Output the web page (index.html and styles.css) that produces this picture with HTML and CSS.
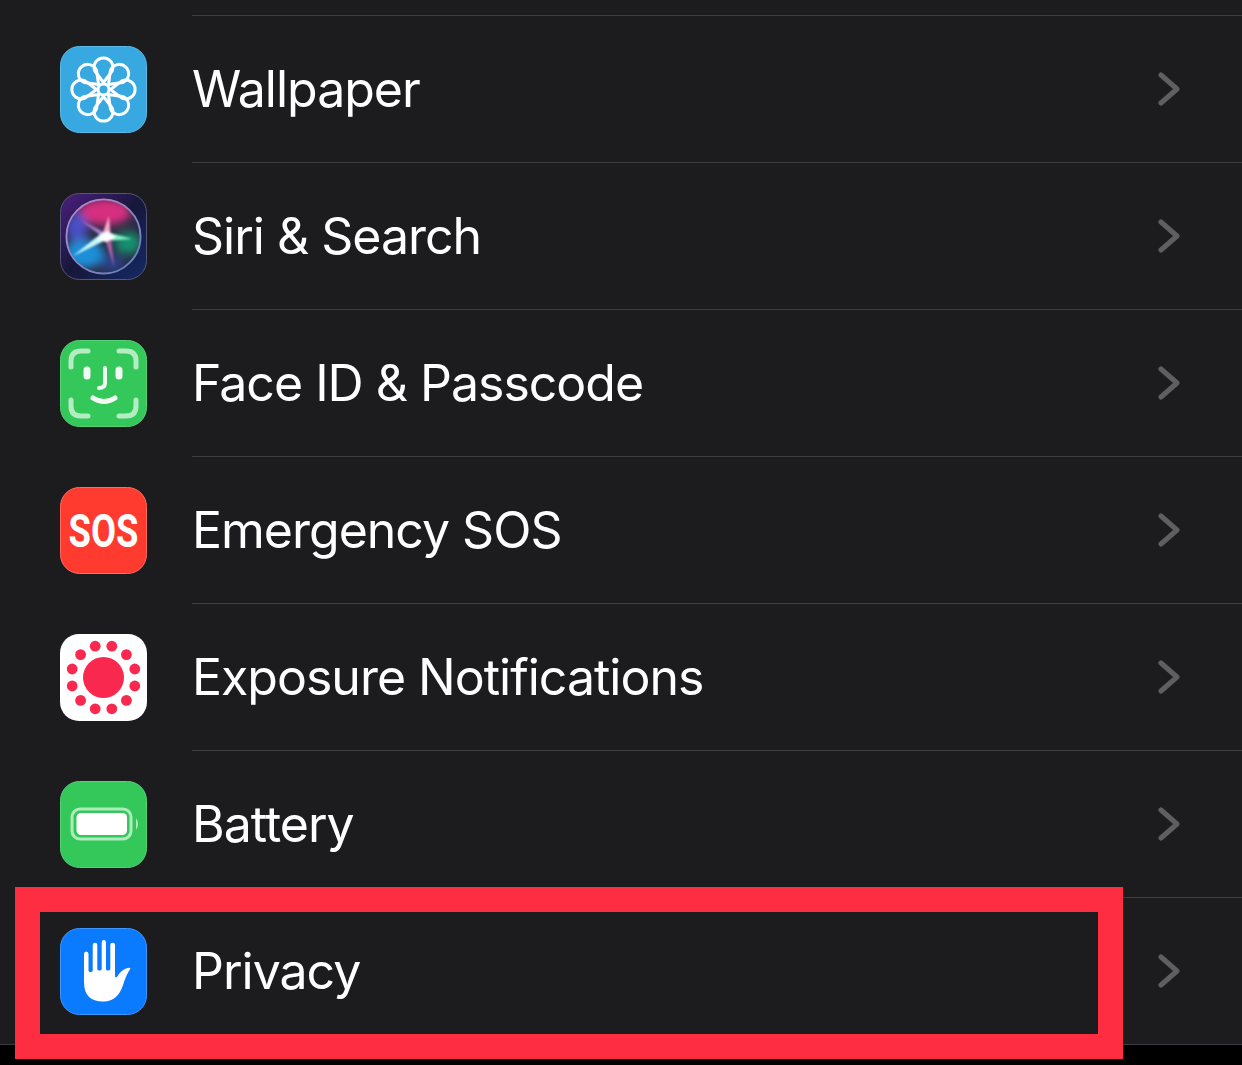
FILE: index.html
```html
<!DOCTYPE html>
<html lang="en">
<head>
<meta charset="utf-8">
<title>Settings</title>
<link rel="stylesheet" href="styles.css">
</head>
<body>
<main class="settings">
  <div class="top-rule"></div>

  <div class="row">
    <svg class="icon" viewBox="0 0 87 87">
      <defs>
        <path id="petal" d="M0 -7 L-8.6 -18.4 A9.4 9.4 0 1 1 8.6 -18.4 Z"/>
      </defs>
      <rect x=".5" y=".5" width="86" height="86" rx="19" fill="#37a8e0" stroke="#5cb9e6"/>
      <g transform="translate(43.5 43.5)" fill="none" stroke="#fff" stroke-width="3" stroke-linejoin="round">
        <use href="#petal"/>
        <use href="#petal" transform="rotate(45)"/>
        <use href="#petal" transform="rotate(90)"/>
        <use href="#petal" transform="rotate(135)"/>
        <use href="#petal" transform="rotate(180)"/>
        <use href="#petal" transform="rotate(225)"/>
        <use href="#petal" transform="rotate(270)"/>
        <use href="#petal" transform="rotate(315)"/>
        <circle r="5.5" fill="#37a8e0"/>
      </g>
    </svg>
    <div class="row-body"><span class="label">Wallpaper</span>
      <svg class="chevron" viewBox="0 0 22 34"><path d="M3 3 L19 17 L3 31"/></svg></div>
  </div>

  <div class="row">
    <svg class="icon" viewBox="0 0 87 87">
      <defs>
        <linearGradient id="siriBg" x1="0" y1="0" x2="1" y2="1"><stop offset="0" stop-color="#4b1f7e"/><stop offset=".5" stop-color="#17173a"/><stop offset="1" stop-color="#142a66"/></linearGradient>
        <linearGradient id="siriRing" x1="0" y1="0" x2="1" y2="1"><stop offset="0" stop-color="#b98fcb"/><stop offset="1" stop-color="#5f7fb8"/></linearGradient>
        <filter id="blurBig"><feGaussianBlur stdDeviation="4"/></filter>
        <filter id="blurSmall"><feGaussianBlur stdDeviation="1.2"/></filter>
        <clipPath id="siriClip"><circle cx="43.5" cy="43.5" r="36.5"/></clipPath>
      </defs>
      <rect x=".5" y=".5" width="86" height="86" rx="19" fill="url(#siriBg)" stroke="#55557a"/>
      <circle cx="43.5" cy="43.5" r="37" fill="#2a2c44" stroke="url(#siriRing)" stroke-width="2"/>
      <g clip-path="url(#siriClip)">
        <g filter="url(#blurBig)">
          <ellipse cx="45" cy="19" rx="26" ry="13" fill="#d82f80"/>
          <ellipse cx="17" cy="34" rx="11" ry="15" fill="#4a4fc5"/>
          <ellipse cx="24" cy="61" rx="20" ry="14" fill="#1a8fd8"/>
          <ellipse cx="68" cy="50" rx="13" ry="11" fill="#18906e"/>
          <ellipse cx="52" cy="70" rx="12" ry="9" fill="#2b3f88"/>
        </g>
        <g filter="url(#blurSmall)">
          <path d="M41 44 L49 23 L51 46 Z" fill="#f6a3c8"/>
          <path d="M42 38 L22 28 L45 46 Z" fill="#a87fd0"/>
          <path d="M47 39 L72 46 L47 48 Z" fill="#7ff0c0"/>
          <path d="M45 46 L54 74 L51 43 Z" fill="#a8609f"/>
          <path d="M13 63 L43 39 L48 46 Z" fill="#c8f8fa"/>
          <path d="M37 46 L47 38 L56 44 L46 49 Z" fill="#fff"/>
        </g>
      </g>
    </svg>
    <div class="row-body"><span class="label">Siri &amp; Search</span>
      <svg class="chevron" viewBox="0 0 22 34"><path d="M3 3 L19 17 L3 31"/></svg></div>
  </div>

  <div class="row">
    <svg class="icon" viewBox="0 0 87 87">
      <rect x=".5" y=".5" width="86" height="86" rx="19" fill="#34c759" stroke="#55d277"/>
      <g fill="none" stroke="#b5edc3" stroke-width="5" stroke-linecap="round">
        <path d="M11 27 V21 Q11 11 21 11 H28"/>
        <path d="M59 11 H66 Q76 11 76 21 V27"/>
        <path d="M11 60 V66 Q11 76 21 76 H28"/>
        <path d="M59 76 H66 Q76 76 76 66 V60"/>
      </g>
      <g fill="none" stroke="#f2fcf4" stroke-linecap="round">
        <path d="M27 30 V36 M59 30 V36" stroke-width="7"/>
        <path d="M45 28 V43 Q45 48 39 48" stroke-width="4"/>
        <path d="M33 58 Q44 65 55 58" stroke-width="5"/>
      </g>
    </svg>
    <div class="row-body"><span class="label">Face ID &amp; Passcode</span>
      <svg class="chevron" viewBox="0 0 22 34"><path d="M3 3 L19 17 L3 31"/></svg></div>
  </div>

  <div class="row">
    <svg class="icon" viewBox="0 0 87 87">
      <rect x=".5" y=".5" width="86" height="86" rx="19" fill="#ff3b30" stroke="#ff6a60"/>
      <text class="sos" transform="translate(43.5 60) scale(.79 1)" text-anchor="middle">SOS</text>
    </svg>
    <div class="row-body"><span class="label">Emergency SOS</span>
      <svg class="chevron" viewBox="0 0 22 34"><path d="M3 3 L19 17 L3 31"/></svg></div>
  </div>

  <div class="row">
    <svg class="icon" viewBox="0 0 87 87">
      <rect width="87" height="87" rx="19" fill="#fff"/>
      <g fill="#f9284f">
        <circle cx="43.5" cy="43.5" r="20.5"/>
        <circle cx="35.2" cy="12.2" r="5.4"/><circle cx="51.8" cy="12.2" r="5.4"/>
        <circle cx="66.4" cy="20.6" r="5.4"/><circle cx="74.8" cy="35" r="5.4"/>
        <circle cx="74.8" cy="52" r="5.4"/><circle cx="66.4" cy="66.4" r="5.4"/>
        <circle cx="51.8" cy="74.8" r="5.4"/><circle cx="35.2" cy="74.8" r="5.4"/>
        <circle cx="20.6" cy="66.4" r="5.4"/><circle cx="12.2" cy="52" r="5.4"/>
        <circle cx="12.2" cy="35" r="5.4"/><circle cx="20.6" cy="20.6" r="5.4"/>
      </g>
    </svg>
    <div class="row-body"><span class="label">Exposure Notifications</span>
      <svg class="chevron" viewBox="0 0 22 34"><path d="M3 3 L19 17 L3 31"/></svg></div>
  </div>

  <div class="row">
    <svg class="icon" viewBox="0 0 87 87">
      <rect x=".5" y=".5" width="86" height="86" rx="19" fill="#34c759" stroke="#55d277"/>
      <rect x="12" y="28" width="59" height="30" rx="8" fill="none" stroke="#aeebbd" stroke-width="3"/>
      <rect x="16.5" y="32" width="50.5" height="22" rx="4.5" fill="#fff"/>
      <path d="M76 37 Q80 43 76 49 Z" fill="#aeebbd"/>
    </svg>
    <div class="row-body"><span class="label">Battery</span>
      <svg class="chevron" viewBox="0 0 22 34"><path d="M3 3 L19 17 L3 31"/></svg></div>
  </div>

  <div class="row row-last">
    <svg class="icon" viewBox="0 0 87 87">
      <rect x=".5" y=".5" width="86" height="86" rx="19" fill="#0a7aff" stroke="#3f96ff"/>
      <path fill="#fff" d="M24 26 Q24 23.5 26.2 23.5 Q28.5 23.5 28.5 26 V42.5 Q28.5 44 30.6 44 Q32.7 44 32.7 42.5 V17 Q32.7 14.7 35 14.7 Q37.3 14.7 37.3 17 V41 Q37.3 42.5 39.5 42.5 Q41.7 42.5 41.7 41 V14.3 Q41.7 12 43.9 12 Q46 12 46 14.3 V41 Q46 42.5 48.2 42.5 Q50.3 42.5 50.3 41 V17 Q50.3 14.7 52.6 14.7 Q55 14.7 55 17 V48 Q55 50 57 49 Q60 43 66 40.5 Q70 39 70.5 40.5 Q66 47 63 57 Q58 73 44 73.5 Q24 74 24 54 Z"/>
    </svg>
    <div class="row-body"><span class="label">Privacy</span>
      <svg class="chevron" viewBox="0 0 22 34"><path d="M3 3 L19 17 L3 31"/></svg></div>
  </div>
</main>
<div class="highlight"></div>
</body>
</html>
```
FILE: styles.css
```css
* { box-sizing: border-box; }

html, body {
  margin: 0;
  height: 100%;
  overflow: hidden;
  background: #000;
}

body { position: relative; }

.settings {
  background: #1c1c1e;
  color: #fff;
  font-family: Inter, "Liberation Sans", sans-serif;
}

.top-rule {
  height: 16px;
  margin-left: 192px;
  border-bottom: 1px solid #3d3d40;
}

.row {
  display: flex;
  height: 147px;
  padding-left: 60px;
}

.row-last { border-bottom: 1px solid #3d3d40; }

.icon {
  flex: none;
  width: 87px;
  height: 87px;
  margin-top: 30px;
}

.row-body {
  flex: 1;
  display: flex;
  align-items: center;
  justify-content: space-between;
  margin-left: 45px;
  padding: 0 62px 0 0;
  border-bottom: 1px solid #3d3d40;
}

.row-last .row-body { border-bottom: 0; }

.label {
  font-size: 50px;
  letter-spacing: -1px;
  line-height: 1;
}

.chevron {
  width: 22px;
  height: 34px;
  fill: none;
  stroke: #5f5f62;
  stroke-width: 5;
  stroke-linecap: round;
  stroke-linejoin: round;
}

.sos {
  font-family: Roboto, "Liberation Sans", sans-serif;
  font-weight: 700;
  font-size: 46px;
  fill: #fff;
}

.highlight {
  position: absolute;
  left: 15px;
  top: 887px;
  width: 1108px;
  height: 172px;
  border: 25px solid #ff2d42;
}
```
